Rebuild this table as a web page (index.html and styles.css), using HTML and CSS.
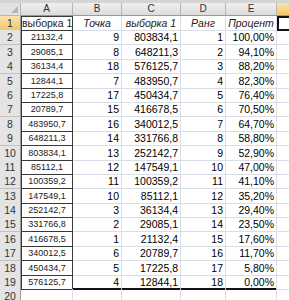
FILE: index.html
```html
<!DOCTYPE html>
<html>
<head>
<meta charset="utf-8">
<link rel="stylesheet" href="styles.css">
</head>
<body>
<div class="sheet">
  <div class="strip"></div>
  <div class="row head">
    <div class="corner"><span class="tri"></span></div>
    <div class="ch">A</div><div class="ch">B</div><div class="ch">C</div><div class="ch">D</div><div class="ch">E</div><div class="ch sel"></div>
  </div>
  <div class="row">
    <div class="rh sel">1</div>
    <div class="c a t1">выборка 1</div>
    <div class="c h">Точка</div>
    <div class="c h">выборка 1</div>
    <div class="c h">Ранг</div>
    <div class="c h">Процент</div>
    <div class="c f active"></div>
  </div>
  <div class="row"><div class="rh">2</div><div class="c a">21132,4</div><div class="c n b">9</div><div class="c n">803834,1</div><div class="c n">1</div><div class="c n">100,00%</div><div class="c f"></div></div>
  <div class="row"><div class="rh">3</div><div class="c a">29085,1</div><div class="c n b">8</div><div class="c n">648211,3</div><div class="c n">2</div><div class="c n">94,10%</div><div class="c f"></div></div>
  <div class="row"><div class="rh">4</div><div class="c a">36134,4</div><div class="c n b">18</div><div class="c n">576125,7</div><div class="c n">3</div><div class="c n">88,20%</div><div class="c f"></div></div>
  <div class="row"><div class="rh">5</div><div class="c a">12844,1</div><div class="c n b">7</div><div class="c n">483950,7</div><div class="c n">4</div><div class="c n">82,30%</div><div class="c f"></div></div>
  <div class="row"><div class="rh">6</div><div class="c a">17225,8</div><div class="c n b">17</div><div class="c n">450434,7</div><div class="c n">5</div><div class="c n">76,40%</div><div class="c f"></div></div>
  <div class="row"><div class="rh">7</div><div class="c a">20789,7</div><div class="c n b">15</div><div class="c n">416678,5</div><div class="c n">6</div><div class="c n">70,50%</div><div class="c f"></div></div>
  <div class="row"><div class="rh">8</div><div class="c a">483950,7</div><div class="c n b">16</div><div class="c n">340012,5</div><div class="c n">7</div><div class="c n">64,70%</div><div class="c f"></div></div>
  <div class="row"><div class="rh">9</div><div class="c a">648211,3</div><div class="c n b">14</div><div class="c n">331766,8</div><div class="c n">8</div><div class="c n">58,80%</div><div class="c f"></div></div>
  <div class="row"><div class="rh">10</div><div class="c a">803834,1</div><div class="c n b">13</div><div class="c n">252142,7</div><div class="c n">9</div><div class="c n">52,90%</div><div class="c f"></div></div>
  <div class="row"><div class="rh">11</div><div class="c a">85112,1</div><div class="c n b">12</div><div class="c n">147549,1</div><div class="c n">10</div><div class="c n">47,00%</div><div class="c f"></div></div>
  <div class="row"><div class="rh">12</div><div class="c a">100359,2</div><div class="c n b">11</div><div class="c n">100359,2</div><div class="c n">11</div><div class="c n">41,10%</div><div class="c f"></div></div>
  <div class="row"><div class="rh">13</div><div class="c a">147549,1</div><div class="c n b">10</div><div class="c n">85112,1</div><div class="c n">12</div><div class="c n">35,20%</div><div class="c f"></div></div>
  <div class="row"><div class="rh">14</div><div class="c a">252142,7</div><div class="c n b">3</div><div class="c n">36134,4</div><div class="c n">13</div><div class="c n">29,40%</div><div class="c f"></div></div>
  <div class="row"><div class="rh">15</div><div class="c a">331766,8</div><div class="c n b">2</div><div class="c n">29085,1</div><div class="c n">14</div><div class="c n">23,50%</div><div class="c f"></div></div>
  <div class="row"><div class="rh">16</div><div class="c a">416678,5</div><div class="c n b">1</div><div class="c n">21132,4</div><div class="c n">15</div><div class="c n">17,60%</div><div class="c f"></div></div>
  <div class="row"><div class="rh">17</div><div class="c a">340012,5</div><div class="c n b">6</div><div class="c n">20789,7</div><div class="c n">16</div><div class="c n">11,70%</div><div class="c f"></div></div>
  <div class="row"><div class="rh">18</div><div class="c a">450434,7</div><div class="c n b">5</div><div class="c n">17225,8</div><div class="c n">17</div><div class="c n">5,80%</div><div class="c f"></div></div>
  <div class="row last"><div class="rh">19</div><div class="c a">576125,7</div><div class="c n b">4</div><div class="c n">12844,1</div><div class="c n">18</div><div class="c n">0,00%</div><div class="c f"></div></div>
  <div class="row"><div class="rh">20</div><div class="c"></div><div class="c"></div><div class="c"></div><div class="c"></div><div class="c"></div><div class="c f"></div></div>
</div>
</body>
</html>
```

FILE: styles.css
```css
html, body {
  margin: 0;
  padding: 0;
  background: #ffffff;
  overflow: hidden;
}

.sheet {
  width: 289px;
  height: 300px;
  overflow: hidden;
  font-family: "Liberation Sans", Arial, sans-serif;
  font-size: 10.5px;
  color: #000;
}

.strip {
  height: 3px;
  background: #d4d4d4;
}

.row {
  display: grid;
  grid-template-columns: 21px 52px 49px 59px 45px 51px 12px;
  height: 14.4px;
}

.row.head {
  height: 13px;
}

.corner {
  background: #e2e2e2;
  border-right: 1px solid #b6b6b6;
  border-bottom: 1px solid #b6b6b6;
  box-sizing: border-box;
  position: relative;
}

.tri {
  position: absolute;
  right: 2px;
  bottom: 2px;
  width: 0;
  height: 0;
  border-left: 7px solid transparent;
  border-bottom: 7px solid #b5b5b5;
}

.ch {
  background: linear-gradient(#f0f0f0, #dcdcdc);
  border-right: 1px solid #b6b6b6;
  border-bottom: 1px solid #9a9a9a;
  box-sizing: border-box;
  text-align: center;
  line-height: 12px;
  font-size: 10px;
  color: #333;
}

.ch.sel {
  background: linear-gradient(#fbe2ae, #f4c766);
  border-right: none;
}

.rh {
  background: #e4e4e4;
  border-right: 1px solid #9a9a9a;
  border-bottom: 1px solid #c2c2c2;
  box-sizing: border-box;
  text-align: center;
  line-height: 14px;
  font-size: 10.5px;
  color: #333;
}

.rh.sel {
  background: linear-gradient(#fbe2ae, #f4c766);
}

.c {
  border-right: 1px solid #d8dde6;
  border-bottom: 1px solid #d8dde6;
  box-sizing: border-box;
  line-height: 14px;
  white-space: nowrap;
  overflow: hidden;
  padding: 0 2px;
}

.c.a {
  font-size: 9px;
  text-align: center;
  border-left: 1px solid #3a3a3a;
  border-right: 1px solid #3a3a3a;
  border-bottom: 1px solid #3a3a3a;
  color: #222;
  overflow: visible;
  padding: 0;
}

.c.a.t1 {
  font-size: 10.5px;
  border-top: 1px solid #3a3a3a;
  line-height: 12px;
}

.c.h {
  font-style: italic;
  text-align: center;
  color: #222;
}

.c.n {
  text-align: right;
}

.c.f {
  border-right: none;
  padding: 0;
}

.c.active {
  border: 2px solid #111;
  border-right: none;
}

.row.last .c.n {
  border-bottom: 2px solid #111;
}
```
